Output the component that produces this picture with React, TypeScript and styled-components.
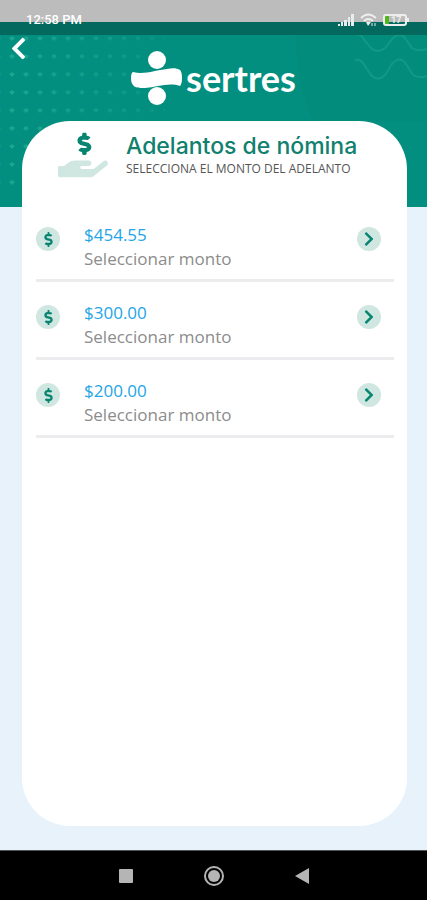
import React from "react";
import styled, { createGlobalStyle } from "styled-components";
import {
  FaChevronLeft,
  FaChevronRight,
  FaDollarSign,
  FaHandHoldingUsd,
} from "react-icons/fa";

const GlobalStyle = createGlobalStyle`
  *, *::before, *::after { box-sizing: border-box; }
  body { margin: 0; font-family: "Open Sans", sans-serif; }
  button { font: inherit; border: 0; padding: 0; background: none; cursor: pointer; }
  h1, p, ul { margin: 0; padding: 0; }
  svg { display: block; }
`;

const Screen = styled.div`
  position: relative;
  isolation: isolate;
  display: flex;
  flex-direction: column;
  min-height: 100vh;
  background: #e8f2fb;
`;

const Backdrop = styled.div`
  position: absolute;
  z-index: -1;
  top: 0;
  left: 0;
  right: 0;
  height: 207px;
  display: flex;
  justify-content: space-between;
  overflow: hidden;
  background: #038f7f;
`;

const StatusBar = styled.div`
  display: flex;
  align-items: flex-end;
  justify-content: space-between;
  height: 35px;
  padding: 0 18px 8px 26px;
  background: linear-gradient(#bcbcbc 22px, #03695e 22px);
  color: #fff;
  font: 500 13px/15px Roboto, sans-serif;
`;

const StatusIcons = styled.div`
  display: flex;
  align-items: center;
  gap: 6px;
  height: 15px;
`;

const Header = styled.header`
  display: grid;
  grid-template-columns: 36px 1fr 36px;
  height: 86px;
`;

const BackButton = styled.button`
  display: flex;
  align-items: flex-start;
  justify-content: center;
  padding-top: 1px;
  color: #fff;
`;

const Brand = styled.div`
  display: flex;
  align-items: flex-start;
  justify-content: center;
  gap: 4px;
  padding-top: 16px;
  color: #fff;
  font: 700 36px/54px Lato, sans-serif;
`;

const Card = styled.main`
  flex: 1;
  display: flex;
  flex-direction: column;
  gap: 45px;
  margin: 0 20px 24px 22px;
  padding: 11px 13px 48px 14px;
  border-radius: 48px;
  background: #fff;
`;

const CardHeader = styled.div`
  display: flex;
  align-items: flex-end;
  gap: 18px;
  height: 46px;
  padding-left: 22px;
`;

const HandIcon = styled(FaHandHoldingUsd)`
  flex: none;
  width: 50px;
  height: 46px;
  path { fill: url(#two-tone); }
`;

const Title = styled.h1`
  color: #10806f;
  font: 500 23px/28px Inter, sans-serif;
  white-space: nowrap;
`;

const Subtitle = styled.p`
  color: #555;
  font: 400 12px/18px "Open Sans", sans-serif;
  white-space: nowrap;
`;

const List = styled.ul`
  list-style: none;
`;

const Item = styled.li`
  height: 78px;
  padding-top: 19px;
  border-bottom: 3px solid #ececef;
  &:first-child { height: 59px; padding-top: 0; }
`;

const Row = styled.button`
  display: grid;
  grid-template-columns: 48px 1fr 37px;
  width: 100%;
  text-align: left;
`;

const Badge = styled.span`
  display: flex;
  align-items: center;
  justify-content: center;
  width: 24px;
  height: 24px;
  margin-top: 4px;
  border-radius: 50%;
  background: #d0e6e1;
  color: #078571;
`;

const Labels = styled.span`
  display: flex;
  flex-direction: column;
`;

const Amount = styled.span`
  color: #23a5e6;
  font: 400 17px/23px "Open Sans", sans-serif;
`;

const Hint = styled.span`
  color: #8c8c8c;
  font: 400 17px/25px "Open Sans", sans-serif;
`;

const NavBar = styled.nav`
  display: flex;
  align-items: center;
  justify-content: center;
  gap: 68px;
  height: 50px;
  border-top: 1px solid #555;
  background: #000;
`;

const NavButton = styled.button`
  display: flex;
  align-items: center;
  justify-content: center;
  width: 20px;
  height: 20px;
`;

const BatteryShell = styled.span`
  display: flex;
  align-items: center;
  width: 24px;
  height: 12px;
  padding-left: 6px;
  border: 2px solid #eee;
  border-radius: 3px;
  background: linear-gradient(90deg, #51b51e 4px, transparent 4px);
  color: #eee;
  font: 700 9px/8px Roboto, sans-serif;
`;

const BatteryTip = styled.span`
  width: 2px;
  height: 4px;
  margin-left: -6px;
  background: #eee;
`;

const Logo = () => (
  <svg width="51" height="55" viewBox="0 0 51 55" fill="currentColor" aria-hidden="true">
    <circle cx="26" cy="9" r="9" />
    <circle cx="26" cy="45" r="9" />
    <path d="M2 21C13 24 25 19 36 18c5-1 10-1 13 1q2 2 2 8t-2 8C38 31 26 36 14 37 8 37 4 37 2 34Q0 32 0 27t2-6Z" />
  </svg>
);

const Dots = () => (
  <svg width="190" height="207" aria-hidden="true">
    <defs>
      <pattern id="dots" x="5" y="0" width="14" height="18" patternUnits="userSpaceOnUse">
        <path d="m7 0 3 2-3 3-3-3Z" fill="#2fb59b" />
      </pattern>
      <linearGradient id="fade">
        <stop offset="0" stopColor="#fff" stopOpacity=".6" />
        <stop offset="1" stopColor="#fff" stopOpacity=".1" />
      </linearGradient>
      <mask id="dots-fade"><rect width="190" height="207" fill="url(#fade)" /></mask>
      <linearGradient id="two-tone" x2="0" y2="1">
        <stop offset=".56" stopColor="#078571" />
        <stop offset=".56" stopColor="#d0e6e1" />
      </linearGradient>
    </defs>
    <rect width="165" height="150" y="35" fill="url(#dots)" mask="url(#dots-fade)" />
  </svg>
);

const Waves = () => (
  <svg width="140" height="207" viewBox="0 0 140 207" fill="none" aria-hidden="true">
    <path d="M8 30Q9 80 26 121H140V30Z" fill="#028c7c" />
    <g stroke="#23a493" strokeWidth="2" opacity=".5">
      <path d="M68 34q7 0 10 7l6 7q7 6 14 0l8-10q7-6 12 0l7 10q6 4 15 1" />
      <path d="M68 60q7-1 10 6l6 9q7 7 14 0l7-11q8-9 14 0l7 11q6 4 14 1" />
    </g>
  </svg>
);

const Signal = () => (
  <svg width="16" height="12" viewBox="0 0 16 12" fill="#e8eeee" aria-hidden="true">
    <path d="M0 10h2v2H0zM3 8h2v4H3zM6 6h3v6H6zM10 3h2v9h-2zM13 0h3v12h-3z" />
  </svg>
);

const Wifi = () => (
  <svg width="17" height="14" viewBox="0 0 17 14" fill="none" stroke="#eee" strokeWidth="2" aria-hidden="true">
    <path d="M1 5q7-7 15 0M4 8q4-4 9 0" />
    <path d="m6 9 2 4 3-4Z" fill="#eee" stroke="none" />
    <path d="M12 10v3M15 10v3" strokeWidth="1" />
  </svg>
);

const amounts = ["$454.55", "$300.00", "$200.00"];

export default function App() {
  return (
    <>
      <GlobalStyle />
      <Screen>
        <Backdrop>
          <Dots />
          <Waves />
        </Backdrop>
        <StatusBar>
          <span>12:58 PM</span>
          <StatusIcons>
            <Signal />
            <Wifi />
            <BatteryShell>17</BatteryShell>
            <BatteryTip />
          </StatusIcons>
        </StatusBar>
        <Header>
          <BackButton type="button" aria-label="Volver">
            <FaChevronLeft size={25} />
          </BackButton>
          <Brand>
            <Logo />
            <span>sertres</span>
          </Brand>
        </Header>
        <Card>
          <CardHeader>
            <HandIcon aria-hidden="true" />
            <div>
              <Title>Adelantos de nómina</Title>
              <Subtitle>SELECCIONA EL MONTO DEL ADELANTO</Subtitle>
            </div>
          </CardHeader>
          <List>
            {amounts.map((amount) => (
              <Item key={amount}>
                <Row type="button">
                  <Badge>
                    <FaDollarSign size={15} />
                  </Badge>
                  <Labels>
                    <Amount>{amount}</Amount>
                    <Hint>Seleccionar monto</Hint>
                  </Labels>
                  <Badge>
                    <FaChevronRight size={16} />
                  </Badge>
                </Row>
              </Item>
            ))}
          </List>
        </Card>
        <NavBar>
          <NavButton type="button" aria-label="Recientes">
            <svg width="14" height="14" aria-hidden="true"><rect width="14" height="14" rx="1" fill="#b5b5b5" /></svg>
          </NavButton>
          <NavButton type="button" aria-label="Inicio">
            <svg width="20" height="20" aria-hidden="true">
              <circle cx="10" cy="10" r="9" fill="none" stroke="#b5b5b5" strokeWidth="2" />
              <circle cx="10" cy="10" r="6" fill="#b5b5b5" />
            </svg>
          </NavButton>
          <NavButton type="button" aria-label="Atrás">
            <svg width="14" height="16" aria-hidden="true"><path d="M0 8 14 0v16Z" fill="#b5b5b5" /></svg>
          </NavButton>
        </NavBar>
      </Screen>
    </>
  );
}
